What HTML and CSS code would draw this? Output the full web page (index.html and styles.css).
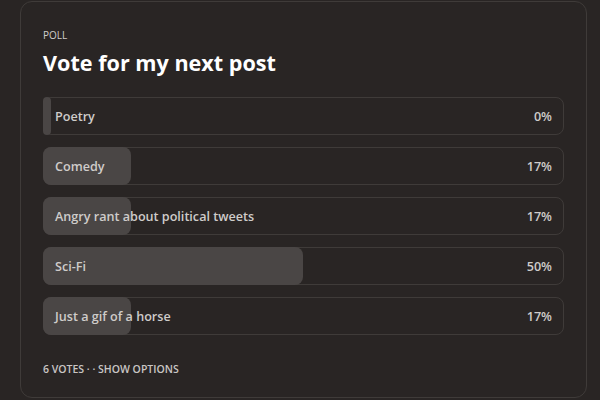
FILE: index.html
```html
<!DOCTYPE html>
<html>
<head>
<meta charset="utf-8">
<link rel="stylesheet" href="styles.css">
</head>
<body>
<div class="card">
  <div class="kicker">Poll</div>
  <h1 class="title">Vote for my next post</h1>
  <div class="options">
    <div class="option"><div class="fill" style="width:0%"></div><span class="label">Poetry</span><span class="pct">0%</span></div>
    <div class="option"><div class="fill" style="width:17%"></div><span class="label">Comedy</span><span class="pct">17%</span></div>
    <div class="option"><div class="fill" style="width:17%"></div><span class="label">Angry rant about political tweets</span><span class="pct">17%</span></div>
    <div class="option"><div class="fill" style="width:50%"></div><span class="label">Sci-Fi</span><span class="pct">50%</span></div>
    <div class="option"><div class="fill" style="width:17%"></div><span class="label">Just a gif of a horse</span><span class="pct">17%</span></div>
  </div>
  <div class="footer">6 votes · · Show options</div>
</div>
</body>
</html>
```
FILE: styles.css
```css
html, body {
  margin: 0;
  padding: 0;
  background: #292524;
}
body {
  font-family: "Open Sans", "Noto Sans", sans-serif;
  color: #d6d3d1;
  width: 600px;
  height: 400px;
  overflow: hidden;
}
.card {
  margin: 1px 0 0 20px;
  width: 567px;
  height: 397px;
  box-sizing: border-box;
  border: 1px solid #3f3b39;
  border-radius: 12px;
  padding: 26px 22px 0 22px;
}
.kicker {
  font-size: 10px;
  line-height: 14px;
  text-transform: uppercase;
  color: #d0cdcb;
}
.title {
  margin: 6px 0 0 0;
  font-size: 21.6px;
  line-height: 30px;
  font-weight: 700;
  color: #ffffff;
}
.options {
  margin-top: 19px;
  display: flex;
  flex-direction: column;
  gap: 12px;
}
.option {
  position: relative;
  height: 38px;
  box-sizing: border-box;
  border: 1px solid #3f3b39;
  border-radius: 8px;
  display: flex;
  align-items: center;
  justify-content: space-between;
  padding: 0 11px;
  font-size: 12.6px;
  font-weight: 600;
  color: #cfccca;
}
.fill {
  position: absolute;
  left: -1px;
  top: -1px;
  bottom: -1px;
  min-width: 8px;
  background: #4a4645;
  border-radius: 8px;
}
.label, .pct {
  position: relative;
}
.footer {
  margin-top: 27px;
  font-size: 10.5px;
  text-transform: uppercase;
  color: #c9c6c4;
  font-weight: 600;
}
```
